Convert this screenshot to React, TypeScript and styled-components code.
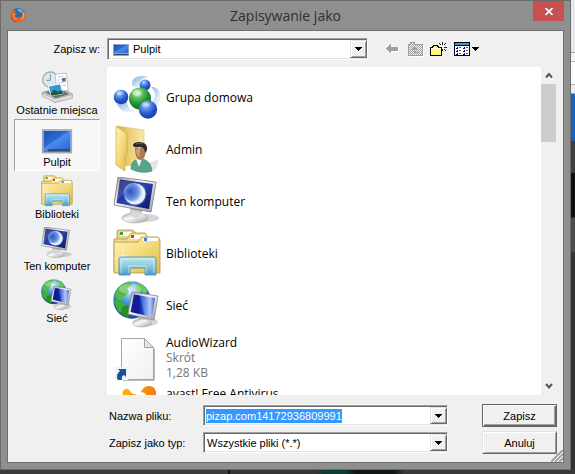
import React, { useEffect, useRef } from "react";
import styled, { createGlobalStyle, css } from "styled-components";

const GlobalStyle = createGlobalStyle`
  * { box-sizing: border-box; }
  body { margin: 0; font: 11px/14px "Liberation Sans", Arial, sans-serif; color: #000; }
  button, input, select { font: inherit; color: inherit; margin: 0; border-radius: 0; }
`;

const Desktop = styled.div`
  min-height: 100vh;
  display: flex;
  padding: 0 4px 4px 0;
  background:
    linear-gradient(90deg, #3b3b3b 228px, #101010 228px 230px, #343434 230px 316px, #0c3b35 324px 346px, #101616 356px 394px, #383838 404px) bottom / 100% 4px no-repeat,
    linear-gradient(#e9e8ee 52px, #9c9fbb 52px 53px, #f4f3f8 53px 61px, #b5b5c5 61px 62px, #fbfbfb 62px 84px, #a9b0c4 84px 85px, #eeeef2 85px 93px, #1565c0 94px 141px, #3c3f3f 141px 173px, #0d1010 173px 217px, #4b4d4d 218px 252px, #333 252px);
`;

const Dialog = styled.main`
  flex: 1;
  min-width: 0;
  display: flex;
  flex-direction: column;
  padding: 0 6px 6px;
  background: #8f8f8f;
  border: 1px solid #6b6b6b;
`;

const TitleBar = styled.header`
  height: 29px;
  display: grid;
  grid-template-columns: 31px 1fr 31px;
  align-items: start;
`;

const AppMark = styled.div`
  padding: 6px 0 0 3px;
  svg { display: block; }
`;

const Title = styled.h1`
  margin: 0;
  text-align: center;
  font: 400 14px/29px "Open Sans", "Noto Sans", sans-serif;
  color: #303030;
`;

const CloseButton = styled.button`
  height: 20px;
  padding: 0;
  border: 0;
  display: grid;
  place-items: center;
  background: #c75050;
`;

const Content = styled.div`
  position: relative;
  flex: 1;
  display: flex;
  flex-direction: column;
  padding: 7px 6px 8px 6px;
  background: #f0f0f0;
  border: 1px solid #6f6f6f;
`;

const LookInRow = styled.div`
  display: grid;
  grid-template-columns: 86px 1fr auto;
  column-gap: 7px;
  align-items: center;
  padding-right: 75px;
`;

const LookInLabel = styled.label`
  text-align: right;
`;

const sunken = css`
  border: 1px solid;
  border-color: #a0a0a0 #fff #fff #a0a0a0;
  box-shadow: inset 1px 1px #696969, inset -1px -1px #e3e3e3;
`;

const raised = css`
  border: 1px solid;
  border-color: #e3e3e3 #696969 #696969 #e3e3e3;
  box-shadow: inset 1px 1px #fff, inset -1px -1px #a0a0a0;
`;

const Combo = styled.div<{ $tall?: boolean }>`
  ${sunken}
  height: ${(p) => (p.$tall ? 22 : 21)}px;
  min-width: 0;
  display: flex;
  align-items: center;
  position: relative;
  padding: 1px 0 1px 2px;
  background: #fff;
`;

const ComboIcon = styled.span`
  flex: none;
  margin: 0 3px 0 3px;
  svg { display: block; }
`;

const ComboSelect = styled.select`
  flex: 1;
  min-width: 0;
  align-self: stretch;
  appearance: none;
  border: 0;
  outline: 0;
  padding: 0 18px 0 1px;
  background: transparent;
`;

const FileNameInput = styled.input`
  flex: 1;
  min-width: 0;
  border: 0;
  outline: 0;
  padding: 0;
  background: transparent;
  &::selection { background: #3399ff; color: #fff; }
`;

const DropFace = styled.span`
  ${raised}
  position: absolute;
  top: 1px;
  right: 0;
  bottom: 1px;
  width: 17px;
  display: grid;
  place-items: center;
  background: #f0f0f0;
  pointer-events: none;
`;

const DropButton = styled.button`
  ${raised}
  flex: none;
  align-self: stretch;
  width: 17px;
  padding: 0;
  display: grid;
  place-items: center;
  background: #f0f0f0;
`;

const Tools = styled.div`
  display: flex;
  margin-left: 6px;
`;

const ToolButton = styled.button<{ $wide?: boolean }>`
  width: ${(p) => (p.$wide ? 32 : 23)}px;
  height: 22px;
  padding: 0;
  border: 0;
  background: transparent;
  display: flex;
  align-items: center;
  justify-content: ${(p) => (p.$wide ? "flex-start" : "center")};
  padding-left: ${(p) => (p.$wide ? 4 : 0)}px;
  gap: 2px;
  svg { flex: none; }
`;

const Browser = styled.div`
  flex: 1;
  min-height: 0;
  display: grid;
  grid-template-columns: 86px 1fr;
  column-gap: 7px;
  margin-top: 7px;
`;

const Places = styled.nav`
  display: flex;
  flex-direction: column;
`;

const Place = styled.button<{ $active?: boolean }>`
  height: 52px;
  padding: 3px 0 0;
  border: 1px solid transparent;
  background: transparent;
  display: flex;
  flex-direction: column;
  align-items: center;
  white-space: nowrap;
  ${(p) =>
    p.$active &&
    css`
      border-color: #a0a0a0 #fff #fff #a0a0a0;
      background: repeating-conic-gradient(#fff 0 25%, #f0f0f0 0 50%) 0 0 / 2px 2px;
    `}
`;

const ListPane = styled.div`
  display: grid;
  grid-template-columns: 1fr 15px;
  height: 328px;
  min-height: 100%;
  margin-right: 1px;
`;

const Files = styled.ul`
  margin: 0;
  padding: 4px 6px 0;
  list-style: none;
  overflow: hidden;
  background: #fff;
`;

const FileRow = styled.li<{ $top?: boolean }>`
  height: 52px;
  display: flex;
  align-items: ${(p) => (p.$top ? "flex-start" : "center")};
  padding-top: ${(p) => (p.$top ? 3 : 0)}px;
  gap: 5px;
  font: 12px/15px "Open Sans", "Noto Sans", sans-serif;
  svg { flex: none; }
`;

const FileText = styled.div`
  white-space: nowrap;
`;

const FileName = styled.div``;

const Meta = styled.div`
  color: #767676;
`;

const ScrollTrack = styled.div`
  display: flex;
  flex-direction: column;
`;

const ScrollArrow = styled.button`
  height: 17px;
  padding: 0;
  border: 0;
  background: transparent;
  display: grid;
  place-items: center;
`;

const Thumb = styled.div`
  height: 58px;
  margin-bottom: auto;
  background: #cdcdcd;
`;

const SaveForm = styled.form`
  display: grid;
  grid-template-columns: 94px 1fr 75px;
  row-gap: 4px;
  align-items: center;
  margin-top: 9px;
  padding-left: 95px;
`;

const Field = styled.div`
  padding-right: 34px;
`;

const PushButton = styled.button<{ $default?: boolean }>`
  ${raised}
  height: 23px;
  padding: 0;
  background: #f0f0f0;
  ${(p) =>
    p.$default &&
    css`
      border-color: #646464;
      box-shadow: inset 1px 1px #fff, inset -1px -1px #696969, inset -2px -2px #a0a0a0;
    `}
`;

const Grip = styled.svg`
  position: absolute;
  right: 0;
  bottom: 0;
`;

const SharedDefs = styled.svg`
  position: absolute;
  width: 0;
  height: 0;
`;

function Paints() {
  return (
    <SharedDefs aria-hidden="true">
      <defs>
        <radialGradient id="blueBall" cx="0.38" cy="0.25" r="0.8">
          <stop offset="0" stopColor="#b9d6ff" /><stop offset="0.3" stopColor="#5d8fe8" /><stop offset="0.65" stopColor="#2450c8" /><stop offset="1" stopColor="#1c3fa8" />
        </radialGradient>
        <radialGradient id="greenBall" cx="0.38" cy="0.25" r="0.8">
          <stop offset="0" stopColor="#d9f7cf" /><stop offset="0.3" stopColor="#5fc060" /><stop offset="0.65" stopColor="#1c8f2a" /><stop offset="1" stopColor="#0e6b1c" />
        </radialGradient>
        <linearGradient id="swoosh" x1="0" y1="0" x2="1" y2="1">
          <stop offset="0" stopColor="#6d9fd8" /><stop offset="0.6" stopColor="#cfe0f4" /><stop offset="1" stopColor="#fff" />
        </linearGradient>
        <linearGradient id="folder" x1="0" y1="0" x2="1" y2="1">
          <stop offset="0" stopColor="#fff3bd" /><stop offset="0.5" stopColor="#f3da7c" /><stop offset="1" stopColor="#dfb94b" />
        </linearGradient>
        <linearGradient id="folderBack" x1="0" y1="0" x2="1" y2="0">
          <stop offset="0" stopColor="#d3ac4a" /><stop offset="0.5" stopColor="#ecd07a" /><stop offset="1" stopColor="#f9e9a8" />
        </linearGradient>
        <linearGradient id="metal" x1="0" y1="0" x2="1" y2="1">
          <stop offset="0" stopColor="#9a9ca0" /><stop offset="0.4" stopColor="#fafafa" /><stop offset="1" stopColor="#9b9da0" />
        </linearGradient>
        <linearGradient id="night" x1="0" y1="0" x2="1" y2="1">
          <stop offset="0" stopColor="#10186c" /><stop offset="0.5" stopColor="#2a42b0" /><stop offset="1" stopColor="#0b1260" />
        </linearGradient>
        <radialGradient id="moon" cx="0.35" cy="0.45" r="0.65">
          <stop offset="0" stopColor="#2d55c4" /><stop offset="0.65" stopColor="#6c92e4" /><stop offset="1" stopColor="#d6e6ff" />
        </radialGradient>
        <linearGradient id="glass" x1="0" y1="0" x2="0" y2="1">
          <stop offset="0" stopColor="#bdeaf2" /><stop offset="0.5" stopColor="#86cbe4" /><stop offset="1" stopColor="#4296c8" />
        </linearGradient>
        <radialGradient id="ocean" cx="0.45" cy="0.25" r="0.8">
          <stop offset="0" stopColor="#c9edff" /><stop offset="0.4" stopColor="#3d98d8" /><stop offset="1" stopColor="#123b92" />
        </radialGradient>
        <linearGradient id="screen" x1="0" y1="0" x2="1" y2="0">
          <stop offset="0" stopColor="#1523a8" /><stop offset="0.35" stopColor="#0a128c" /><stop offset="0.4" stopColor="#2a50d8" /><stop offset="0.8" stopColor="#b2ccfa" /><stop offset="1" stopColor="#3858d0" />
        </linearGradient>
        <linearGradient id="deskBlue" x1="0" y1="0" x2="1" y2="1">
          <stop offset="0" stopColor="#1e4fae" /><stop offset="0.45" stopColor="#2d69d2" /><stop offset="0.5" stopColor="#4a8bec" /><stop offset="1" stopColor="#2c66d0" />
        </linearGradient>
        <linearGradient id="orange" x1="0" y1="0" x2="1" y2="0">
          <stop offset="0" stopColor="#ffb400" /><stop offset="1" stopColor="#f47a14" />
        </linearGradient>
        <linearGradient id="paper" x1="0" y1="0" x2="1" y2="1">
          <stop offset="0" stopColor="#fff" /><stop offset="1" stopColor="#f0f0f0" />
        </linearGradient>
      </defs>
    </SharedDefs>
  );
}

type IconProps = { size?: number };

const Pic = ({ size = 48, children }: IconProps & { children: React.ReactNode }) => (
  <svg width={size} height={size} viewBox="0 0 48 48" aria-hidden="true">{children}</svg>
);

const HomegroupIcon = (p: IconProps) => (
  <Pic {...p}>
    <path d="M19 12C18 5 25 1 36 4C29 5 26 8 25 14C22 14 20 14 19 12Z" fill="url(#swoosh)" opacity=".85" />
    <path d="M38 14C46 13 50 22 45 34L40 28C43 23 43 19 38 14Z" fill="url(#swoosh)" opacity=".8" />
    <path d="M4 31C7 38 13 41 26 38C18 38 14 34 14 29Z" fill="url(#swoosh)" opacity=".8" />
    <circle cx="32" cy="12" r="5.5" fill="url(#blueBall)" />
    <circle cx="8" cy="24" r="7.3" fill="url(#blueBall)" />
    <circle cx="27" cy="25.500" r="11" fill="url(#greenBall)" />
    <circle cx="35" cy="36.500" r="9.2" fill="url(#blueBall)" />
    <ellipse cx="24" cy="20" rx="5" ry="3" fill="#fff" opacity=".35" />
    <ellipse cx="33" cy="31.500" rx="4" ry="2" fill="#fff" opacity=".3" />
    <ellipse cx="7" cy="20" rx="3.500" ry="2" fill="#fff" opacity=".3" />
  </Pic>
);

const UserFolderIcon = (p: IconProps) => (
  <Pic {...p}>
    <path d="M30 40L46 34L43 44L36 47Z" fill="#999" opacity=".25" />
    <path d="M4 1L31 5V38L13 41Z" fill="url(#folderBack)" stroke="#dcbc62" strokeWidth=".6" />
    <path d="M3 1L13 8Q14 9 14 11V28L12 31V46L3 40Z" fill="url(#folder)" stroke="#cfa947" strokeWidth=".7" />
    <path d="M18 44C18 37 22 34 27 34C34 34 38 38 39 46C33 48 25 48 18 44Z" fill="#5aa588" stroke="#3c7f68" strokeWidth=".6" />
    <path d="M23 34L26 42L29 34Z" fill="#eef4f2" />
    <path d="M22 23C22 31 24 35 27 35C31 35 33 30 33 23Z" fill="#a97c55" />
    <path d="M23 25Q24 31 27 32Q26 25 28 22Z" fill="#cfa57d" />
    <path d="M20 21C20 17 26 16 31 18C35 20 35 26 32 28C32 24 30 22 26 22C24 22 22 23 20 21Z" fill="#2b2b2b" />
    <path d="M23 19Q26 17 30 19" fill="none" stroke="#666" />
  </Pic>
);

const ComputerIcon = (p: IconProps) => (
  <Pic {...p}>
    <ellipse cx="33" cy="41" rx="13" ry="4" fill="#777" opacity=".3" />
    <path d="M17 31L29 33L28 42H18Z" fill="#b9bbbd" />
    <ellipse cx="22" cy="41" rx="13" ry="5" fill="url(#metal)" stroke="#aaa" strokeWidth=".6" />
    <path d="M18 33L28 35L27 40Q22 42 18 39Z" fill="#d7d8da" />
    <path d="M5 0L43 5L38 35L1 28Z" fill="url(#metal)" stroke="#777" strokeWidth=".8" />
    <path d="M7 2.500L40 7L36 32L3.500 26Z" fill="url(#night)" />
    <circle cx="22" cy="17" r="11.500" fill="#7f9fec" opacity=".45" />
    <circle cx="22" cy="17" r="10.500" fill="#eaf2ff" />
    <circle cx="20" cy="15.500" r="9.300" fill="url(#moon)" />
    <path d="M7 3L20 5L10 17L4 24Z" fill="#fff" opacity=".15" />
  </Pic>
);

const LibrariesIcon = (p: IconProps) => (
  <Pic {...p}>
    <path d="M4 7V3Q4 1 6 1H20L23 4V16H4Z" fill="#ecd48a" stroke="#b99343" strokeWidth=".8" />
    <path d="M7 3H19V7H7Z" fill="#fff" /><path d="M7 3H10V6H7Z" fill="#34a437" />
    <path d="M1 10H14L17 5Q18 4 20 4H32L36 10V43H1Z" fill="#f2dc8c" stroke="#b99343" strokeWidth=".8" />
    <path d="M18 6H32V10H18Z" fill="#fff" /><path d="M18 6H21V9H18Z" fill="#e3352b" />
    <path d="M1 13H25L28 8H45Q47 8 47 13V44H1Z" fill="url(#folder)" stroke="#b99343" strokeWidth=".8" />
    <path d="M30 9H45V12H30Z" fill="#fff" /><path d="M31 9H34V12H31Z" fill="#2d84d8" />
    <path d="M10 16V42M3 21L18 38M1 30H20M3 38L18 22" stroke="#fffbe0" strokeWidth=".8" opacity=".5" />
    <circle cx="10" cy="30" r="4" fill="#fff" opacity=".6" />
    <path d="M6 46V30Q6 28 8 28H41Q43 28 43 30V46H32V39H17V46Z" fill="url(#glass)" stroke="#4693b8" strokeWidth=".9" opacity=".95" />
    <path d="M8 44V30H41V44M16 44V37H33V44" fill="none" stroke="#dff7fc" strokeWidth=".8" opacity=".8" />
  </Pic>
);

const NetworkIcon = (p: IconProps) => (
  <Pic {...p}>
    <circle cx="19" cy="19" r="18.700" fill="url(#ocean)" />
    <path d="M5 7Q10 1 17 1L20 4L14 7L16 11L11 16L8 20L3 17L2 13Z" fill="#58b947" />
    <path d="M24 1Q31 4 35 10L31 13L29 10L25 12L23 7Z" fill="#6cc84e" />
    <path d="M1 18L7 20L12 23L11 27L7 32Q2 27 1 18Z" fill="#3dae38" />
    <path d="M9 26L15 24L17 30L15 37Q11 36 8 32Z" fill="#238f25" />
    <ellipse cx="17" cy="8" rx="11" ry="5" fill="#fff" opacity=".3" />
    <ellipse cx="36" cy="41" rx="9" ry="4" fill="#777" opacity=".3" />
    <path d="M25 34L34 36L33 42H25Z" fill="#bbb" />
    <ellipse cx="29" cy="42" rx="9.500" ry="4" fill="url(#metal)" stroke="#aaa" strokeWidth=".6" />
    <path d="M19 11L45 15L41 39L15 33Z" fill="url(#metal)" stroke="#888" strokeWidth=".8" />
    <path d="M21 13.500L42 17L39 36L17.500 31Z" fill="url(#screen)" />
    <path d="M21 14L27 15L31 34L24 32Z" fill="#1220a0" opacity=".65" />
  </Pic>
);

const ShortcutFileIcon = (p: IconProps) => (
  <Pic {...p}>
    <path d="M10 47.500H41.500V16" fill="none" stroke="#bbb" />
    <path d="M8.500 5.500H31.500L40.500 14.500V46.500H8.500Z" fill="url(#paper)" stroke="#a4a4a4" />
    <path d="M31.500 5.500V14.500H40.500Z" fill="#e4e4e4" stroke="#a4a4a4" />
    <path d="M2 34H15V47H2Z" fill="#eef4fb" />
    <path d="M5 36H13V44L11 42Q8 43 9 47H5Q2 42 7 38Z" fill="#1c509c" />
  </Pic>
);

const AvastIcon = (p: IconProps) => (
  <Pic {...p}>
    <path d="M10 9A4 4 0 0 1 17 5Q19 9 25 8C30 6 29 0 36 0Q43 0 43 8Q43 15 40 22L38 41L28 34L17 39L18 25Q17 16 10 9Z" fill="url(#orange)" />
    <circle cx="28" cy="12" r="6" fill="#fff" />
  </Pic>
);

const RecentIcon = (p: IconProps) => (
  <Pic {...p}>
    <path d="M2 32L31 24L47 35L46 40L21 47L2 36Z" fill="#c9c9c7" stroke="#8d8d8b" />
    <path d="M6 32L30 26L42 35L22 41Z" fill="#6d716e" />
    <circle cx="14" cy="13" r="11.500" fill="#dae9f2" stroke="#9fb0bc" strokeWidth="2" />
    <path d="M14 5V14H8" fill="none" stroke="#7d909e" strokeWidth="1.500" />
    <path d="M21 5L38 3L41 29L24 31Z" fill="#fff" stroke="#aaa" />
    <path d="M25 9L34 8M25 14L29 13M25 18L38 16M26 22L38 21" stroke="#aaa" />
    <path d="M31 11L37 10V15L32 16Z" fill="#3c6fb3" />
    <path d="M11 23L29 19L33 34L15 37Z" fill="#3695d4" stroke="#fff" strokeWidth="1.500" />
    <path d="M14 34L20 28L25 31L32 29L33 34L16 37Z" fill="#185c46" />
    <path d="M2 33L21 42L47 35V41L21 47L2 38Z" fill="#dedfde" stroke="#969694" strokeWidth=".8" />
  </Pic>
);

const DesktopIcon = (p: IconProps) => (
  <Pic {...p}>
    <path d="M2 10H46V45H2Z" fill="#a9bad0" stroke="#7e90ab" />
    <path d="M4 12H44V39H4Z" fill="url(#deskBlue)" />
    <path d="M4 39H44V43H4Z" fill="#3c4e68" />
    <path d="M4 39H10V43H4Z" fill="#6e8dae" />
  </Pic>
);

const SmallDesktopIcon = () => (
  <svg width="16" height="16" viewBox="0 0 16 16" aria-hidden="true">
    <path d="M0 3H16V15H0Z" fill="#8ea5c4" />
    <path d="M1 4H15V12H1Z" fill="url(#deskBlue)" />
    <path d="M1 13H15V14H1Z" fill="#34435a" />
  </svg>
);

const FirefoxIcon = () => (
  <svg width="16" height="16" viewBox="0 0 16 16" aria-hidden="true">
    <circle cx="8" cy="8" r="7" fill="#256dac" />
    <path d="M7 2Q11 1 13 4L11 6L8 4Z" fill="#59b1dd" />
    <path d="M2 2L4 4L6 4L5 6L7 7L5 9Q7 11 10 10Q13 8 12 4Q16 7 14 12Q12 16 7 15Q0 14 1 6Z" fill="#e66022" />
    <path d="M13 4Q16 8 13 12Q11 14 8 14Q13 13 13 8Z" fill="#f9b532" />
    <path d="M1 7Q1 13 7 15Q3 15 1 11Z" fill="#b5321c" />
    <path d="M3 6L5 7L4 9Q5 12 8 12L5 13Q2 11 3 6Z" fill="#f58a2a" />
  </svg>
);

const DownTriangle = () => (
  <svg width="7" height="4" viewBox="0 0 7 4" shapeRendering="crispEdges" aria-hidden="true">
    <path d="M0 0H7V1H6V2H5V3H4V4H3V3H2V2H1V1H0Z" fill="#000" />
  </svg>
);

const Chevron = ({ down }: { down?: boolean }) => (
  <svg width="8" height="7" viewBox="0 0 8 7" aria-hidden="true">
    <path d={down ? "M1 1L4 4.500L7 1" : "M1 5.500L4 2L7 5.500"} fill="none" stroke="#555" strokeWidth="2" />
  </svg>
);

const BackIcon = () => (
  <svg width="13" height="12" viewBox="0 0 13 12" shapeRendering="crispEdges" aria-hidden="true">
    <path d="M1 6L6 1V4H13V9H6V12Z" fill="#fff" />
    <path d="M0 5.500L5 0V4H12V8H5V11Z" fill="#a0a0a0" />
  </svg>
);

const UpFolderIcon = () => (
  <svg width="16" height="15" viewBox="0 0 16 15" shapeRendering="crispEdges" aria-hidden="true">
    <defs>
      <pattern id="dither" width="2" height="2" patternUnits="userSpaceOnUse">
        <path d="M0 0H1V1H0ZM1 1H2V2H1Z" fill="#a0a0a0" />
      </pattern>
    </defs>
    <path d="M1 14.500H15.500V3" fill="none" stroke="#fff" />
    <path d="M.5 13.500V2.500H2.500V.5H6.500V2.500H14.500V13.500Z" fill="url(#dither)" stroke="#a0a0a0" />
    <path d="M6 5H7V6H8V7H9V8H7V10H11V11H6V8H4V7H5V6H6Z" fill="#a0a0a0" />
  </svg>
);

const NewFolderIcon = () => (
  <svg width="17" height="15" viewBox="0 0 17 15" shapeRendering="crispEdges" aria-hidden="true">
    <path d="M0 5H2V4H3V3H8V4H9V5H12V14H0Z" fill="#000" />
    <path d="M1 6H3V5H4V4H7V5H8V6H11V13H1Z" fill="#fff67c" />
    <path d="M1 6H11V7H1Z" fill="#fffcd8" />
    <path d="M12 0H13V3H12ZM12 7H13V9H12ZM9 5H11V6H9ZM14 5H17V6H14ZM9 1H10V2H9ZM10 2H11V3H10ZM15 1H16V2H15ZM14 2H15V3H14ZM14 7H15V8H14ZM15 8H16V9H15Z" fill="#222" />
  </svg>
);

const ViewsIcon = () => (
  <svg width="16" height="14" viewBox="0 0 16 14" shapeRendering="crispEdges" aria-hidden="true">
    <path d="M0 0H16V14H0Z" fill="#000" />
    <path d="M1 1H15V3H1Z" fill="#3a94f0" />
    <path d="M1 4H15V13H1Z" fill="#fff" />
    {[5, 8, 11].map((y) => (
      <g key={y}>
        <path d={`M3 ${y}H4V${y + 1}H3ZM2 ${y + 1}H4V${y + 2}H2ZM10 ${y}H11V${y + 1}H10ZM9 ${y + 1}H11V${y + 2}H9Z`} fill="#00007c" />
        <path d={`M5 ${y}H7V${y + 1}H5ZM12 ${y}H14V${y + 1}H12Z`} fill="#555" />
      </g>
    ))}
  </svg>
);

const places = [
  { name: "Ostatnie miejsca", Icon: RecentIcon },
  { name: "Pulpit", Icon: DesktopIcon, active: true },
  { name: "Biblioteki", Icon: LibrariesIcon },
  { name: "Ten komputer", Icon: ComputerIcon },
  { name: "Sieć", Icon: NetworkIcon },
];

const files = [
  { name: "Grupa domowa", Icon: HomegroupIcon },
  { name: "Admin", Icon: UserFolderIcon },
  { name: "Ten komputer", Icon: ComputerIcon },
  { name: "Biblioteki", Icon: LibrariesIcon },
  { name: "Sieć", Icon: NetworkIcon },
  { name: "AudioWizard", Icon: ShortcutFileIcon, meta: ["Skrót", "1,28 KB"] },
  { name: "avast! Free Antivirus", Icon: AvastIcon, top: true },
];

export default function App() {
  const nameRef = useRef<HTMLInputElement>(null);

  useEffect(() => {
    nameRef.current?.focus();
    nameRef.current?.select();
  }, []);

  return (
    <Desktop>
      <GlobalStyle />
      <Paints />
      <Dialog>
        <TitleBar>
          <AppMark><FirefoxIcon /></AppMark>
          <Title>Zapisywanie jako</Title>
          <CloseButton type="button" aria-label="Zamknij">
            <svg width="8" height="7" viewBox="0 0 8 7" aria-hidden="true">
              <path d="M.5 0L7.500 7M7.500 0L.5 7" stroke="#fff" strokeWidth="1.700" />
            </svg>
          </CloseButton>
        </TitleBar>
        <Content>
          <LookInRow>
            <LookInLabel htmlFor="look-in">Zapisz w:</LookInLabel>
            <Combo $tall>
              <ComboIcon><SmallDesktopIcon /></ComboIcon>
              <ComboSelect id="look-in" defaultValue="Pulpit"><option>Pulpit</option></ComboSelect>
              <DropFace><DownTriangle /></DropFace>
            </Combo>
            <Tools>
              <ToolButton type="button" aria-label="Wstecz" disabled><BackIcon /></ToolButton>
              <ToolButton type="button" aria-label="W górę" disabled><UpFolderIcon /></ToolButton>
              <ToolButton type="button" aria-label="Nowy folder"><NewFolderIcon /></ToolButton>
              <ToolButton type="button" aria-label="Widok" $wide><ViewsIcon /><DownTriangle /></ToolButton>
            </Tools>
          </LookInRow>
          <Browser>
            <Places>
              {places.map(({ name, Icon, active }) => (
                <Place key={name} type="button" $active={active}>
                  <Icon size={32} />
                  {name}
                </Place>
              ))}
            </Places>
            <ListPane>
              <Files>
                {files.map(({ name, Icon, meta, top }) => (
                  <FileRow key={name} $top={top}>
                    <Icon />
                    <FileText>
                      <FileName>{name}</FileName>
                      {meta?.map((line) => <Meta key={line}>{line}</Meta>)}
                    </FileText>
                  </FileRow>
                ))}
              </Files>
              <ScrollTrack>
                <ScrollArrow type="button" aria-label="Przewiń w górę"><Chevron /></ScrollArrow>
                <Thumb />
                <ScrollArrow type="button" aria-label="Przewiń w dół"><Chevron down /></ScrollArrow>
              </ScrollTrack>
            </ListPane>
          </Browser>
          <SaveForm onSubmit={(e) => e.preventDefault()}>
            <label htmlFor="file-name">Nazwa pliku:</label>
            <Field>
              <Combo>
                <FileNameInput id="file-name" ref={nameRef} defaultValue="pizap.com14172936809991" />
                <DropButton type="button" aria-label="Poprzednie nazwy"><DownTriangle /></DropButton>
              </Combo>
            </Field>
            <PushButton type="submit" $default>Zapisz</PushButton>
            <label htmlFor="file-type">Zapisz jako typ:</label>
            <Field>
              <Combo>
                <ComboSelect id="file-type" defaultValue="Wszystkie pliki (*.*)"><option>Wszystkie pliki (*.*)</option></ComboSelect>
                <DropFace><DownTriangle /></DropFace>
              </Combo>
            </Field>
            <PushButton type="button">Anuluj</PushButton>
          </SaveForm>
          <Grip width="12" height="12" viewBox="0 0 12 12" aria-hidden="true">
            <path d="M0 12L12 0M4 12L12 4M8 12L12 8" stroke="#a0a0a0" strokeWidth="2" />
            <path d="M2 12L12 2M6 12L12 6" stroke="#fff" />
          </Grip>
        </Content>
      </Dialog>
    </Desktop>
  );
}
